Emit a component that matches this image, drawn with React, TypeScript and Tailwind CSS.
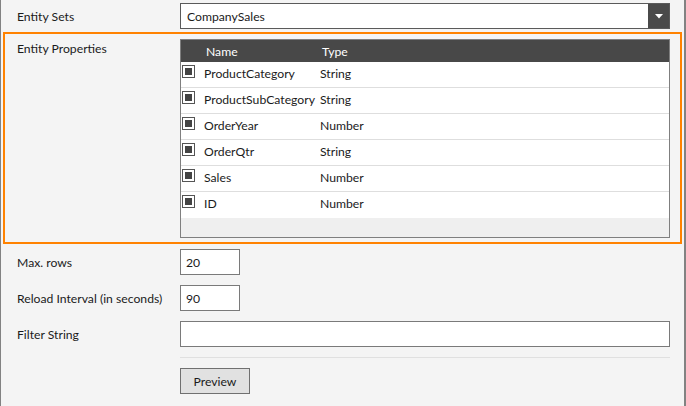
import React from "react";

const rows = [
  ["ProductCategory", "String"],
  ["ProductSubCategory", "String"],
  ["OrderYear", "Number"],
  ["OrderQtr", "String"],
  ["Sales", "Number"],
  ["ID", "Number"],
];

function Check() {
  return (
    <div className="w-[13px] h-[13px] border border-[#555555] bg-white flex items-center justify-center shrink-0">
      <div className="w-[7px] h-[7px] bg-[#444444]" />
    </div>
  );
}

export default function App() {
  return (
    <div
      className="w-[686px] h-[406px] bg-[#f4f4f4] border-l border-r-2 border-[#828282] text-[12.2px] text-[#1b1b1b] flex flex-col overflow-hidden"
      style={{ fontFamily: 'Lato, "Noto Sans", sans-serif' }}
    >
      {/* Entity Sets */}
      <div className="flex items-center mt-[3px]">
        <div className="w-[179px] pl-[16px] leading-4 pt-[1px]">Entity Sets</div>
        <div className="w-[490px] h-[26px] border border-[#5a5a5a] bg-white flex items-center">
          <div className="flex-1 pl-[6px] leading-4 pt-[1px]">CompanySales</div>
          <div className="w-[21px] h-full bg-[#4a4a4a] flex items-center justify-center">
            <svg width="8" height="5" viewBox="0 0 8 5">
              <path d="M0 0 L8 0 L4 4.5 Z" fill="#ffffff" />
            </svg>
          </div>
        </div>
      </div>

      {/* Entity Properties */}
      <div className="mt-[3px] ml-[2px] mr-[2px] h-[212px] border-2 border-[#ff8200] flex pt-[5px]">
        <div className="w-[175px] pl-[12px] pt-[2px] leading-4">Entity Properties</div>
        <div className="w-[490px] h-[199px] border border-[#7f7f7f] bg-[#efefef] flex flex-col">
          <div className="h-[22px] bg-[#484848] text-white flex items-center shrink-0">
            <div className="w-[141px] pl-[25px] leading-4 pt-[1px]">Name</div>
            <div className="leading-4 pt-[1px]">Type</div>
          </div>
          {rows.map(([n, t], i) => (
            <div
              key={n}
              className={`h-[26px] shrink-0 bg-white flex items-start pt-[3px] pl-[1px] ${
                i < rows.length - 1 ? "border-b border-[#dedede]" : ""
              }`}
            >
              <Check />
              <div className="w-[125px] pl-[9px] leading-4 pt-[1px] whitespace-nowrap">{n}</div>
              <div className="leading-4 pt-[1px]">{t}</div>
            </div>
          ))}
        </div>
      </div>

      {/* Max rows */}
      <div className="flex items-center mt-[5px]">
        <div className="w-[179px] pl-[16px] leading-4 pt-[1px]">Max. rows</div>
        <div className="w-[60px] h-[26px] border border-[#7a7a7a] bg-white flex items-center pl-[5px] leading-4 pt-[1px]">
          20
        </div>
      </div>

      {/* Reload interval */}
      <div className="flex items-center mt-[10px]">
        <div className="w-[179px] pl-[16px] leading-4 pt-[1px] whitespace-nowrap">Reload Interval (in seconds)</div>
        <div className="w-[60px] h-[26px] border border-[#7a7a7a] bg-white flex items-center pl-[5px] leading-4 pt-[1px]">
          90
        </div>
      </div>

      {/* Filter string */}
      <div className="flex items-center mt-[10px]">
        <div className="w-[179px] pl-[16px] leading-4 pt-[1px]">Filter String</div>
        <div className="w-[490px] h-[26px] border border-[#7a7a7a] bg-white" />
      </div>

      {/* Separator */}
      <div className="ml-[179px] w-[490px] h-px bg-[#e0e0e0] mt-[10px]" />

      {/* Preview */}
      <div className="ml-[179px] mt-[10px]">
        <button className="w-[70px] h-[26px] border border-[#707070] bg-[#e1e1e1] leading-4 pt-[1px] flex items-center justify-center">
          Preview
        </button>
      </div>
    </div>
  );
}
